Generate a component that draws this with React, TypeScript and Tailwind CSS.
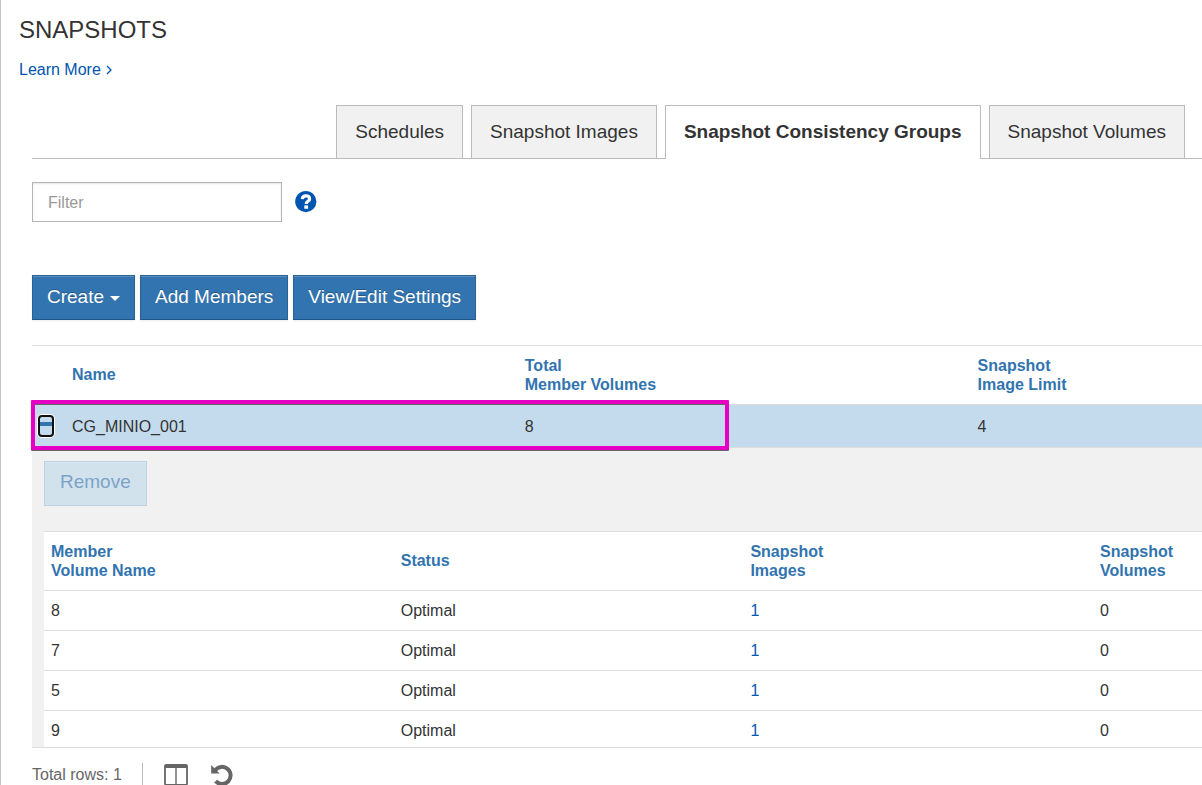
const tabs = [
  { label: "Schedules", active: false },
  { label: "Snapshot Images", active: false },
  { label: "Snapshot Consistency Groups", active: true },
  { label: "Snapshot Volumes", active: false },
];

const members = [
  { name: "8", status: "Optimal", images: 1, volumes: 0 },
  { name: "7", status: "Optimal", images: 1, volumes: 0 },
  { name: "5", status: "Optimal", images: 1, volumes: 0 },
  { name: "9", status: "Optimal", images: 1, volumes: 0 },
];

const primaryButton =
  "flex h-[45px] items-center border border-[#2a6294] border-b-[#1f5687] bg-[#3174af] px-3.5 pb-0.5 text-[19px] text-white shadow-[inset_0_1px_0_rgba(255,255,255,0.2),0_1px_2px_rgba(0,0,0,0.08)] [text-shadow:0_-1px_0_rgba(0,0,0,0.25)]";

function HelpIcon() {
  return (
    <svg viewBox="0 0 22 22" className="size-[22px]" aria-hidden="true">
      <circle cx="10.8" cy="10.6" r="10.6" fill="#0055b0" />
      <path d="M7.3 8.1C7.5 5.8 9 4.9 10.9 4.9c2.2 0 3.7 1.1 3.7 3 0 2.4-3.4 2.5-3.4 5" fill="none" stroke="#fff" strokeWidth="3.2" />
      <path d="M9.3 14.4h3.8v3.4H9.3z" fill="#fff" />
    </svg>
  );
}

function ColumnsIcon() {
  return (
    <svg viewBox="0 0 24 22" className="h-[22px] w-6" aria-hidden="true">
      <rect x="1" y="1" width="22" height="20" rx="1" fill="none" stroke="#666" strokeWidth="1.8" />
      <path d="M1 1h22v3H1z" fill="#666" />
      <path d="M12 3v18" stroke="#666" strokeWidth="1.4" />
    </svg>
  );
}

function ResetIcon() {
  return (
    <svg viewBox="0 0 22 22" className="size-[22px]" aria-hidden="true">
      <path d="M4.2 6.2A8.6 8.6 0 1 1 4.6 17.2" fill="none" stroke="#666" strokeWidth="4" />
      <path d="M0.2 1v8.4h8.4z" fill="#666" />
    </svg>
  );
}

export default function App() {
  return (
    <main className="overflow-x-hidden border-l border-[#c4c4c4] bg-white font-['Liberation_Sans',Arial,sans-serif] text-base leading-5 text-[#333]">
      <header className="px-[18px] pt-3.5">
        <h1 className="text-2xl">SNAPSHOTS</h1>
        <a href="#learn" className="mt-3.5 inline-flex items-center gap-[5px] text-[#0055b0]">
          Learn More
          <svg viewBox="0 0 6 10" className="h-2.5 w-1.5" fill="none" stroke="currentColor" strokeWidth="1.3" aria-hidden="true">
            <path d="M1 1l4 4-4 4" />
          </svg>
        </a>
      </header>

      <div className="pl-[31px]">
        <div role="tablist" className="mt-[25px] flex justify-end gap-2 border-b border-[#bbb] pr-[17px]">
          {tabs.map((t) => (
            <button
              key={t.label}
              role="tab"
              aria-selected={t.active}
              className={
                t.active
                  ? "-mb-px h-[54px] border border-b-0 border-[#bbb] bg-white px-[18px] pb-0.5 text-[19px] font-bold whitespace-nowrap"
                  : "h-[53px] border border-b-0 border-[#bbb] bg-[#f1f1f1] px-[18px] text-[19px] whitespace-nowrap"
              }
            >
              {t.label}
            </button>
          ))}
        </div>

        <div className="mt-[23px] flex items-center gap-[13px]">
          <input
            type="text"
            aria-label="Filter"
            placeholder="Filter"
            className="h-10 w-[250px] border border-[#b5b5b5] px-[15px] pt-0.5 shadow-[inset_0_1px_2px_rgba(0,0,0,0.1)] placeholder:text-[#999]"
          />
          <button aria-label="Help">
            <HelpIcon />
          </button>
        </div>

        <div className="mt-[53px] flex gap-[5px]">
          <button className={primaryButton}>
            Create
            <svg viewBox="0 0 10 5" className="mt-1 ml-1.5 h-[5px] w-2.5" aria-hidden="true">
              <path d="M0 0h10L5 5z" fill="#fff" />
            </svg>
          </button>
          <button className={primaryButton}>Add Members</button>
          <button className={primaryButton}>View/Edit Settings</button>
        </div>

        <section className="relative mt-[25px]">
          <div className="max-h-[403px] overflow-hidden border-y border-[#ddd]">
            <table className="w-full table-fixed border-collapse text-left">
              <colgroup>
                <col className="w-[33px]" />
                <col className="w-[38.7%]" />
                <col className="w-[38.7%]" />
                <col />
              </colgroup>
              <thead>
                <tr className="h-[58px] leading-[19px] text-[#3174af]">
                  <th aria-label="Expand" />
                  <th className="px-[7px]">Name</th>
                  <th className="px-[7px]">
                    Total
                    <br />
                    Member Volumes
                  </th>
                  <th className="px-[7px]">
                    Snapshot
                    <br />
                    Image Limit
                  </th>
                </tr>
              </thead>
              <tbody>
                <tr className="h-[43px] border-y border-[#ddd] bg-[#c4dbed]">
                  <td className="pl-1.5">
                    <button
                      aria-label="Collapse CG_MINIO_001"
                      className="flex h-[22px] w-4 items-center rounded border-2 border-[#101010] bg-[#c4dbed] pb-1 shadow-[0_0_0_1px_#fff]"
                    >
                      <span className="h-1 w-full bg-[#3174af]" />
                    </button>
                  </td>
                  <td className="px-[7px] pt-0.5">CG_MINIO_001</td>
                  <td className="px-[7px] pt-0.5">8</td>
                  <td className="px-[7px] pt-0.5">4</td>
                </tr>
                <tr>
                  <td colSpan={4} className="bg-[#f1f1f1] pt-[13px] pl-3">
                    <button
                      disabled
                      className="flex h-[45px] items-center border border-[#bfd2df] bg-[#d1e2ed] px-[15px] pb-0.5 text-[19px] text-[#7da3c8] shadow-[inset_0_1px_0_rgba(255,255,255,0.2)]"
                    >
                      Remove
                    </button>
                    <table className="mt-[25px] w-full table-fixed border-collapse bg-white text-left">
                      <colgroup>
                        <col className="w-[30.2%]" />
                        <col className="w-[30.2%]" />
                        <col className="w-[30.2%]" />
                        <col />
                      </colgroup>
                      <thead>
                        <tr className="h-[59px] border-t border-[#ddd] leading-[19px] text-[#3174af]">
                          <th className="px-[7px]">
                            Member
                            <br />
                            Volume Name
                          </th>
                          <th className="px-[7px]">Status</th>
                          <th className="px-[7px]">
                            Snapshot
                            <br />
                            Images
                          </th>
                          <th className="px-[7px]">
                            Snapshot
                            <br />
                            Volumes
                          </th>
                        </tr>
                      </thead>
                      <tbody>
                        {members.map((m) => (
                          <tr key={m.name} className="h-10 border-t border-[#ddd]">
                            <td className="px-[7px] pt-0.5">{m.name}</td>
                            <td className="px-[7px] pt-0.5">{m.status}</td>
                            <td className="px-[7px] pt-0.5">
                              <a href="#images" className="text-[#0055b0]">
                                {m.images}
                              </a>
                            </td>
                            <td className="px-[7px] pt-0.5">{m.volumes}</td>
                          </tr>
                        ))}
                      </tbody>
                    </table>
                  </td>
                </tr>
              </tbody>
            </table>
          </div>
          <div className="pointer-events-none absolute top-[55px] -left-px h-[50px] w-[59.7%] rounded-[1px] border-4 border-[#e600c4] drop-shadow-[0_1px_0_#666]" />
        </section>

        <footer className="flex h-[37px] items-center pt-4 text-[#666]">
          <span>Total rows: 1</span>
          <span className="ml-5 h-6 w-px bg-[#bbb]" />
          <button aria-label="Choose columns" className="ml-[21px]">
            <ColumnsIcon />
          </button>
          <button aria-label="Reset table" className="ml-[23px]">
            <ResetIcon />
          </button>
        </footer>
      </div>
    </main>
  );
}
